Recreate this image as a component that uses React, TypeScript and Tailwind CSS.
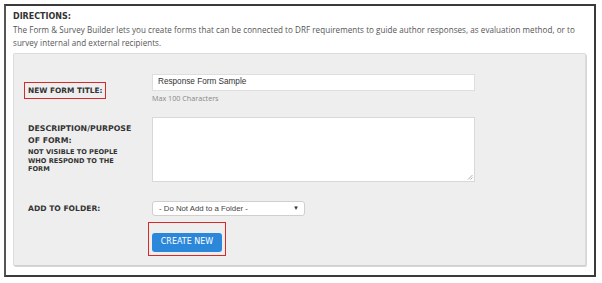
import React from "react";

const labelFont = { fontFamily: "'DejaVu Sans', 'Open Sans', sans-serif" };

export default function App() {
  return (
    <div className="w-[602px] h-[283px] bg-white pt-[4px] pl-[4px]">
      <div className="w-[592px] h-[273px] border-2 border-[#3a3a3a] border-l-[#555] pl-[7px] pt-[4px] font-['Open_Sans',sans-serif]">
        <p className="text-[8px] font-bold text-[#333] leading-[13px]" style={labelFont}>
          DIRECTIONS:
        </p>
        <p className="text-[8.05px] text-[#555] leading-[13px] w-[572px] tracking-[0.05px]">
          The Form &amp; Survey Builder lets you create forms that can be connected to DRF requirements to guide author
          responses, as evaluation method, or to survey internal and external recipients.
        </p>

        <div className="mt-[4px] w-[573px] h-[213px] bg-[#eeeeee] border border-[#dcdcdc] border-b-[#cfcfcf] rounded-[2px] shadow-[1px_1px_0_#d6d6d6] pl-[10px] pt-[20px]">
          {/* title row */}
          <div className="flex">
            <div className="w-[128px] pt-[1px]">
              <span
                className="inline-block border border-[#d42a2a] px-[3px] py-[2px] text-[7.4px] font-bold text-[#333]"
                style={labelFont}
              >
                NEW FORM TITLE:
              </span>
            </div>
            <div>
              <div className="w-[323px] h-[17px] bg-white border border-[#dedede] flex items-center pl-[5px] text-[8.2px] text-[#333] font-['Liberation_Sans',sans-serif]">
                Response Form Sample
              </div>
              <p className="text-[7.2px] text-[#888] mt-[2px] leading-[10px]">Max 100 Characters</p>
            </div>
          </div>

          {/* description row */}
          <div className="flex mt-[14px]">
            <div className="w-[128px] pl-[4px] pt-[6px] text-[#333] font-bold" style={labelFont}>
              <p className="text-[7.8px] leading-[12px]">DESCRIPTION/PURPOSE</p>
              <p className="text-[7.8px] leading-[12px]">OF FORM:</p>
              <p className="text-[6.6px] leading-[8.5px] mt-[1px]">
                NOT VISIBLE TO PEOPLE
                <br />
                WHO RESPOND TO THE
                <br />
                FORM
              </p>
            </div>
            <div className="relative w-[323px] h-[65px] bg-white border border-[#d8d8d8]">
              <svg className="absolute right-[1px] bottom-[1px]" width="6" height="6" viewBox="0 0 6 6">
                <path d="M5.5 1 L1 5.5 M5.5 3.5 L3.5 5.5" stroke="#999" strokeWidth="0.8" />
              </svg>
            </div>
          </div>

          {/* folder row */}
          <div className="flex items-center mt-[19px]">
            <div className="w-[128px] pl-[4px] text-[7.6px] font-bold text-[#333]" style={labelFont}>
              ADD TO FOLDER:
            </div>
            <div className="w-[153px] h-[15px] bg-white border border-[#cfcfcf] rounded-[3px] flex items-center justify-between pl-[6px] pr-[5px] text-[7.8px] text-[#444] font-['Liberation_Sans',sans-serif]">
              <span>- Do Not Add to a Folder -</span>
              <span className="text-[6px] text-[#333]">▼</span>
            </div>
          </div>

          {/* button */}
          <div className="ml-[124px] mt-[6px]">
            <div className="inline-block border border-[#d42a2a] p-[3px]">
              <button
                className="w-[70px] h-[19px] bg-[#2b87d9] rounded-[3px] text-white text-[8px]"
                style={{ fontFamily: "'DejaVu Sans', sans-serif" }}
              >
                CREATE NEW
              </button>
            </div>
          </div>
        </div>
      </div>
    </div>
  );
}
